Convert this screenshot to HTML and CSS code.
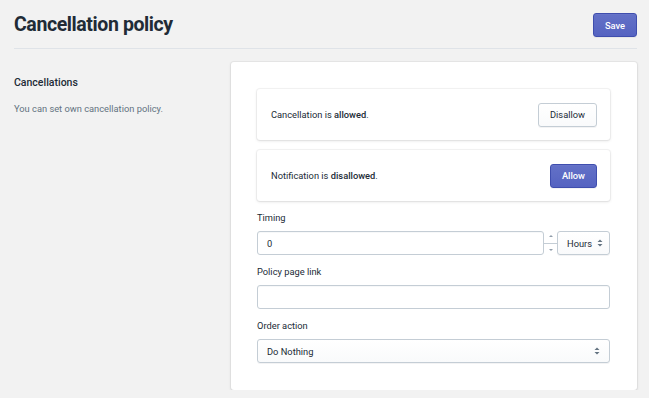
FILE: index.html
```html
<!DOCTYPE html>
<html lang="en">
<head>
    <meta charset="UTF-8">
    <meta name="viewport" content="width=device-width, initial-scale=1.0">
    <title>Cancellation policy</title>
    <link rel="stylesheet" href="styles.css">
</head>
<body>

<div class="page">
    <div class="page-header">
        <h1>Cancellation policy</h1>
        <button class="btn btn-primary">Save</button>
    </div>

    <div class="layout">
        <div class="aside">
            <h2>Cancellations</h2>
            <p>You can set own cancellation policy.</p>
        </div>

        <div class="card">
            <div class="setting">
                <span>Cancellation is <b>allowed</b>.</span>
                <button class="btn">Disallow</button>
            </div>
            <div class="setting">
                <span>Notification is <b>disallowed</b>.</span>
                <button class="btn btn-primary">Allow</button>
            </div>

            <div class="field">
                <label for="timing">Timing</label>
                <div class="timing-row">
                    <input type="text" id="timing" class="text-input" value="0">
                    <div class="stepper">
                        <span class="step-up"></span>
                        <span class="step-down"></span>
                    </div>
                    <div class="select select-small">
                        <span>Hours</span>
                        <svg width="6" height="8" viewBox="0 0 6 8"><path d="M3 0.5 L5.5 3 H0.5 Z M3 7.5 L5.5 5 H0.5 Z" fill="#637381"/></svg>
                    </div>
                </div>
            </div>

            <div class="field">
                <label for="link">Policy page link</label>
                <input type="text" id="link" class="text-input">
            </div>

            <div class="field">
                <label>Order action</label>
                <div class="select">
                    <span>Do Nothing</span>
                    <svg width="6" height="8" viewBox="0 0 6 8"><path d="M3 0.5 L5.5 3 H0.5 Z M3 7.5 L5.5 5 H0.5 Z" fill="#637381"/></svg>
                </div>
            </div>
        </div>
    </div>
</div>

</body>
</html>
```

FILE: styles.css
```css
body {
    margin: 0;
    background-color: #f2f2f2;
    font-family: Roboto, "Liberation Sans", sans-serif;
    font-size: 9.3px;
    color: #212b36;
}

.page {
    padding: 0 12px 0 14px;
}

.page-header {
    display: flex;
    justify-content: space-between;
    align-items: center;
    padding: 13px 0 11px;
    border-bottom: 1px solid #dfe3e8;
}

h1 {
    margin: 0;
    font-size: 19.5px;
    font-weight: 700;
    letter-spacing: -0.4px;
    line-height: 24px;
}

.layout {
    display: flex;
    padding-top: 13px;
}

.aside {
    width: 217px;
    padding-top: 14px;
}

h2 {
    margin: 0;
    font-size: 10.5px;
    font-weight: 500;
    line-height: 14px;
}

.aside p {
    margin: 12px 0 0;
    color: #637381;
    line-height: 13px;
}

.card {
    flex: 1;
    background: #fff;
    border-radius: 3px;
    padding: 27px 27px 27px 26px;
    box-shadow: 0 0 0 1px rgba(63, 63, 68, 0.05), 0 1px 3px 0 rgba(63, 63, 68, 0.15);
}

.setting {
    display: flex;
    justify-content: space-between;
    align-items: center;
    height: 51px;
    padding: 0 13px 0 14px;
    margin-bottom: 10px;
    border-radius: 3px;
    box-shadow: 0 0 0 1px rgba(63, 63, 68, 0.05), 0 1px 3px 0 rgba(63, 63, 68, 0.15);
}

.setting b {
    font-weight: 500;
}

.btn {
    height: 24px;
    padding: 0 11px;
    font-family: inherit;
    font-size: 9.3px;
    color: #212b36;
    background: linear-gradient(to bottom, #fff, #f9fafb);
    border: 1px solid #c4cdd5;
    border-radius: 3px;
    box-shadow: 0 1px 0 0 rgba(22, 29, 37, 0.05);
    cursor: pointer;
}

.btn-primary {
    color: #fff;
    font-weight: 500;
    background: linear-gradient(to bottom, #6371c7, #5563c1);
    border-color: #3f4eae;
    box-shadow: inset 0 1px 0 0 #6774c8, 0 1px 0 0 rgba(22, 29, 37, 0.05);
}

.field {
    margin-top: 10px;
}

.field label {
    display: block;
    line-height: 14px;
    margin-bottom: 6px;
}

.text-input {
    display: block;
    box-sizing: border-box;
    width: 100%;
    height: 24px;
    margin: 0;
    padding: 0 9px;
    font-family: inherit;
    font-size: 9.3px;
    color: #212b36;
    border: 1px solid #c4cdd5;
    border-radius: 3px;
    box-shadow: inset 0 1px 0 0 rgba(99, 115, 129, 0.05);
    outline: none;
}

.timing-row {
    display: flex;
}

.timing-row .text-input {
    flex: 1;
}

.stepper {
    width: 13px;
    display: flex;
    flex-direction: column;
}

.stepper span {
    flex: 1;
    position: relative;
}

.step-up {
    border-bottom: 1px solid #c4cdd5;
}

.step-up::after,
.step-down::after {
    content: "";
    position: absolute;
    left: 5px;
    border-left: 2px solid transparent;
    border-right: 2px solid transparent;
}

.step-up::after {
    top: 4px;
    border-bottom: 2px solid #919eab;
}

.step-down::after {
    top: 5px;
    border-top: 2px solid #919eab;
}

.select {
    display: flex;
    justify-content: space-between;
    align-items: center;
    box-sizing: border-box;
    height: 24px;
    padding: 0 9px 0 9px;
    background: linear-gradient(to bottom, #fff, #f9fafb);
    border: 1px solid #c4cdd5;
    border-radius: 3px;
    box-shadow: 0 1px 0 0 rgba(22, 29, 37, 0.05);
}

.select-small {
    width: 53px;
    padding: 0 6px 0 9px;
}
```
